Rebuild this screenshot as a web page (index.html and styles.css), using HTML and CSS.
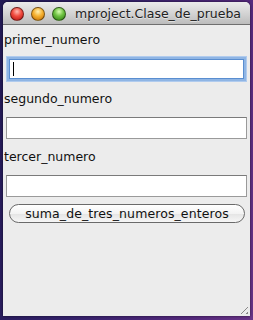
FILE: index.html
```html
<!DOCTYPE html>
<html>
<head>
<meta charset="utf-8">
<link rel="stylesheet" href="styles.css">
</head>
<body>
<div class="window">
  <div class="titlebar">
    <div class="lights">
      <span class="light red"></span>
      <span class="light yellow"></span>
      <span class="light green"></span>
    </div>
    <div class="title">mproject.Clase_de_prueba</div>
  </div>
  <div class="content">
    <label class="label">primer_numero</label>
    <div class="field focused"><span class="caret"></span></div>
    <label class="label">segundo_numero</label>
    <div class="field"></div>
    <label class="label">tercer_numero</label>
    <div class="field"></div>
    <button class="btn">suma_de_tres_numeros_enteros</button>
  </div>
  <div class="grip"></div>
</div>
</body>
</html>
```
FILE: styles.css
```css
html, body {
  margin: 0;
  padding: 0;
  width: 253px;
  height: 320px;
  overflow: hidden;
}
body {
  background: linear-gradient(100deg, #221a55 0%, #35226c 40%, #55297d 80%, #6a3488 100%);
  font-family: "DejaVu Sans", "Liberation Sans", sans-serif;
  padding: 2px 3px 0 3px;
  box-sizing: border-box;
}
.window {
  position: relative;
  width: 247px;
  height: 314px;
  background: #ececec;
  border-radius: 5px 5px 0 0;
  display: flex;
  flex-direction: column;
  box-shadow: 0 0 3px rgba(0,0,0,0.6);
}
.titlebar {
  height: 22px;
  border-radius: 5px 5px 0 0;
  background: linear-gradient(#ebebeb, #d2d2d2 55%, #bcbcbc);
  border-bottom: 1px solid #6f6f6f;
  display: flex;
  align-items: center;
  padding-left: 7px;
}
.lights {
  display: flex;
  gap: 7px;
  margin-top: 2px;
}
.light {
  width: 14px;
  height: 14px;
  border-radius: 50%;
  box-sizing: border-box;
  border: 1px solid rgba(0,0,0,0.45);
}
.red { background: radial-gradient(circle at 50% 30%, #ffb8b0 0%, #f04a3e 45%, #b01010 100%); }
.yellow { background: radial-gradient(circle at 50% 30%, #fff0b0 0%, #f5b030 45%, #c06a00 100%); }
.green { background: radial-gradient(circle at 50% 30%, #d8ffb0 0%, #6cc040 45%, #2c7a10 100%); }
.title {
  margin-left: 9px;
  margin-top: 1px;
  font-size: 12.5px;
  color: #222;
  text-shadow: 0 1px 0 rgba(255,255,255,0.5);
}
.content {
  display: flex;
  flex-direction: column;
  align-items: stretch;
  padding: 7px 3px 0 1px;
}
.label {
  font-size: 12.5px;
  color: #111;
  line-height: 16px;
}
.field {
  height: 22px;
  margin: 10px 0 10px 2px;
  background: #fff;
  border: 1px solid #9a9a9a;
  border-top-color: #7a7a7a;
  box-sizing: border-box;
  position: relative;
}
.field.focused {
  margin: 11px 3px 12px 5px;
  height: 20px;
  border: 1px solid #5a8ed0;
  box-shadow: 0 0 0 2px #8fb5e4, 0 0 0 3px #b0cbee;
}
.caret {
  position: absolute;
  left: 3px;
  top: 2px;
  width: 1px;
  height: 14px;
  background: #000;
}
.field + .label + .field + .label + .field {
  margin-bottom: 7px;
}
.btn {
  margin: 0 2px 0 5px;
  height: 19px;
  border-radius: 10px;
  border: 1px solid #6a6a6a;
  background: linear-gradient(#ffffff, #f3f3f3 50%, #e4e4e4 51%, #f6f6f6);
  font-family: "DejaVu Sans", "Liberation Sans", sans-serif;
  font-size: 12.5px;
  letter-spacing: 0.1px;
  color: #111;
  padding: 0;
}
.grip {
  position: absolute;
  right: 2px;
  bottom: 2px;
  width: 11px;
  height: 11px;
  background: repeating-linear-gradient(135deg, transparent 0 2px, #8a8a8a 2px 3px, transparent 3px 4px);
  clip-path: polygon(100% 0, 100% 100%, 0 100%);
}
```
